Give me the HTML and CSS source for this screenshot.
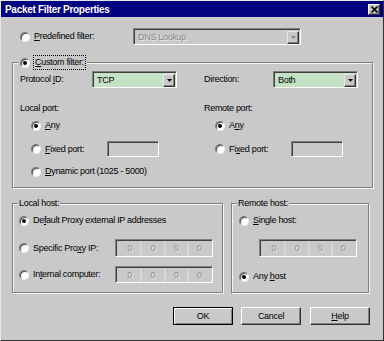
FILE: index.html
```html
<!DOCTYPE html>
<html lang="en">

<head>
  <meta charset="UTF-8" />
  <title>Packet Filter Properties</title>
  <link rel="stylesheet" href="styles.css">
</head>

<body>
  <div class="dialog">
    <div class="titlebar">
      <span class="title">Packet Filter Properties</span>
      <span class="close">
        <svg width="7" height="7" viewBox="0 0 7 7"><path d="M0.5 0.5 L6.5 6.5 M6.5 0.5 L0.5 6.5" stroke="#000" stroke-width="1.6" /></svg>
      </span>
    </div>

    <div class="predef">
      <span class="radio"></span>
      <span class="label predefLabel"><u>P</u>redefined filter:</span>
      <div class="field combo disabled predefCombo">
        <span class="comboText">DNS Lookup</span>
        <span class="drop"><svg width="5" height="3" viewBox="0 0 5 3"><path d="M0 0 H5 L2.5 3 Z" fill="#8a8a8a" /></svg></span>
      </div>
    </div>

    <div class="group custom">
      <div class="legend">
        <span class="radio on"></span>
        <span class="label focus"><u>C</u>ustom filter:</span>
      </div>
      <div class="cols">
        <div class="col">
          <div class="row selRow">
            <span class="label selLabel">Protocol <u>I</u>D:</span>
            <div class="field combo">
              <span class="comboText">TCP</span>
              <span class="drop"><svg width="5" height="3" viewBox="0 0 5 3"><path d="M0 0 H5 L2.5 3 Z" fill="#000" /></svg></span>
            </div>
          </div>
          <div class="caption">Local port:</div>
          <div class="row opt first">
            <span class="radio on"></span><span class="label"><u>A</u>ny</span>
          </div>
          <div class="row opt fixed">
            <span class="radio"></span><span class="label portLabel"><u>F</u>ixed port:</span>
            <div class="field port"></div>
          </div>
          <div class="row opt last">
            <span class="radio"></span><span class="label"><u>D</u>ynamic port (1025 - 5000)</span>
          </div>
        </div>
        <div class="col">
          <div class="row selRow">
            <span class="label selLabel dirLabel">Direction:</span>
            <div class="field combo">
              <span class="comboText">Both</span>
              <span class="drop"><svg width="5" height="3" viewBox="0 0 5 3"><path d="M0 0 H5 L2.5 3 Z" fill="#000" /></svg></span>
            </div>
          </div>
          <div class="caption">Remote port:</div>
          <div class="row opt first">
            <span class="radio on"></span><span class="label">A<u>n</u>y</span>
          </div>
          <div class="row opt fixed">
            <span class="radio"></span><span class="label portLabel">Fi<u>x</u>ed port:</span>
            <div class="field port"></div>
          </div>
        </div>
      </div>
    </div>

    <div class="hosts">
      <div class="group localHost">
        <div class="legend"><span class="label">Local host:</span></div>
        <div class="row opt hostFirst">
          <span class="radio on"></span><span class="label">De<u>f</u>ault Proxy external IP addresses</span>
        </div>
        <div class="row opt ipRow specific">
          <span class="radio"></span><span class="label ipLabel">Specific Pro<u>x</u>y IP:</span>
          <div class="field ip"><span>0</span><span>0</span><span>0</span><span>0</span></div>
        </div>
        <div class="row opt ipRow internal">
          <span class="radio"></span><span class="label ipLabel">In<u>t</u>ernal computer:</span>
          <div class="field ip"><span>0</span><span>0</span><span>0</span><span>0</span></div>
        </div>
      </div>
      <div class="group remoteHost">
        <div class="legend"><span class="label">Remote host:</span></div>
        <div class="row opt hostFirst">
          <span class="radio"></span><span class="label"><u>S</u>ingle host:</span>
        </div>
        <div class="row ipRow single">
          <div class="field ip"><span>0</span><span>0</span><span>0</span><span>0</span></div>
        </div>
        <div class="row opt anyHost">
          <span class="radio on"></span><span class="label">Any <u>h</u>ost</span>
        </div>
      </div>
    </div>

    <div class="buttons">
      <button class="btn default">OK</button>
      <button class="btn">Cancel</button>
      <button class="btn help"><u>H</u>elp</button>
    </div>
  </div>
</body>

</html>
```

FILE: styles.css
```css
* {
  margin: 0;
  padding: 0;
  box-sizing: border-box;
}

body {
  background: #c9c9c9;
  font-family: "Liberation Sans", Arial, sans-serif;
  font-size: 9px;
  letter-spacing: -0.3px;
  color: #000;
}

u {
  text-decoration: underline;
  text-underline-offset: 1px;
}

/* window */
.dialog {
  width: 384px;
  height: 341px;
  background: #c9c9c9;
  border: 1px solid;
  border-color: #e6e6e6 #303030 #303030 #e6e6e6;
}

.titlebar {
  height: 16px;
  background: #000080;
  display: flex;
  align-items: center;
  padding: 0 3px 0 4px;
}

.title {
  color: #fff;
  font-weight: bold;
  font-size: 10px;
  letter-spacing: -0.3px;
}

.close {
  margin-left: auto;
  width: 12px;
  height: 11px;
  background: #c9c9c9;
  border: 1px solid;
  border-color: #fff #303030 #303030 #fff;
  box-shadow: inset -1px -1px #808080;
  display: grid;
  place-items: center;
}

.close svg {
  display: block;
}

.row {
  display: flex;
  align-items: center;
}

.label {
  line-height: 13px;
  white-space: nowrap;
}

/* radio */
.radio {
  flex: none;
  width: 10px;
  height: 10px;
  border-radius: 50%;
  background: #fff;
  border: 1px solid;
  border-color: #7a7a7a #f2f2f2 #f2f2f2 #7a7a7a;
  box-shadow: inset 1px 1px #505050;
  margin-right: 4px;
  display: grid;
  place-items: center;
}

.radio.on::after {
  content: "";
  width: 4px;
  height: 4px;
  border-radius: 50%;
  background: #000;
}

/* sunken fields */
.field {
  border: 1px solid;
  border-color: #808080 #fff #fff #808080;
  box-shadow: inset 1px 1px #404040;
  background: #c9c9c9;
}

.combo {
  width: 85px;
  height: 17px;
  display: flex;
  align-items: center;
  background: #c6e2c4;
  padding: 1px 1px 0 2px;
}

.comboText {
  padding-left: 2px;
  line-height: 13px;
}

.drop {
  margin-left: auto;
  width: 12px;
  height: 13px;
  background: #c9c9c9;
  border: 1px solid;
  border-color: #e8e8e8 #303030 #303030 #e8e8e8;
  box-shadow: inset -1px -1px #808080;
  display: grid;
  place-items: center;
}

.drop svg {
  display: block;
}

.combo.disabled {
  background: #c9c9c9;
  color: #8a8a8a;
}

.combo.disabled .comboText {
  text-shadow: 1px 1px #e8e8e8;
}

/* predefined */
.predef {
  display: flex;
  align-items: center;
  height: 17px;
  margin-top: 11px;
  padding-left: 19px;
}

.predefLabel {
  width: 99px;
}

.predefCombo {
  width: 168px;
}

/* group boxes */
.group {
  border: 1px solid #808080;
  box-shadow: inset 1px 1px #f4f4f4, 1px 1px 0 #f4f4f4;
}

.legend {
  display: flex;
  align-items: center;
  width: fit-content;
  height: 13px;
  margin: -7px 0 0 5px;
  padding: 0 2px;
  background: #c9c9c9;
}

.focus {
  outline: 1px dotted #000;
  outline-offset: 0;
  padding: 0 1px;
}

.custom {
  width: 361px;
  height: 126px;
  margin: 17px 0 0 11px;
}

.cols {
  display: grid;
  grid-template-columns: 184px 184px;
  margin-top: 2px;
  padding-left: 7px;
}

.selRow {
  height: 17px;
}

.selLabel {
  width: 72px;
}

.dirLabel {
  width: 69px;
}

.caption {
  margin-top: 14px;
  line-height: 13px;
}

.opt {
  padding-left: 11px;
}

.opt.first {
  margin-top: 4px;
  height: 13px;
}

.opt.fixed {
  margin-top: 9px;
  height: 16px;
}

.opt.last {
  margin-top: 8px;
  height: 13px;
}

.portLabel {
  width: 62px;
}

.port {
  width: 52px;
  height: 16px;
}

/* hosts */
.hosts {
  display: flex;
  gap: 8px;
  margin: 15px 0 0 11px;
}

.localHost {
  width: 211px;
  height: 90px;
}

.remoteHost {
  width: 138px;
  height: 90px;
}

.localHost .legend,
.remoteHost .legend {
  padding: 0 1px;
}

.hosts .opt {
  padding-left: 6px;
}

.remoteHost .opt {
  padding-left: 7px;
}

.hostFirst {
  margin-top: 4px;
  height: 13px;
}

.ipLabel {
  width: 82px;
}

.specific {
  margin-top: 12px;
  height: 18px;
}

.internal {
  margin-top: 9px;
  height: 17px;
}

.single {
  margin-top: 12px;
  height: 18px;
  padding-left: 27px;
}

.anyHost {
  margin-top: 13px;
  height: 13px;
}

.ip {
  width: 98px;
  height: 100%;
  display: flex;
  align-items: center;
  padding: 1px 2px 0 3px;
}

.ip span {
  flex: 1;
  text-align: center;
  color: #8f8f8f;
  text-shadow: 1px 1px #e4e4e4;
  line-height: 13px;
  border-left: 2px solid #d3dbd2;
}

.ip span:first-child {
  border-left: 0;
}

/* buttons */
.buttons {
  display: flex;
  justify-content: flex-end;
  gap: 8px;
  margin-top: 14px;
  padding-right: 13px;
}

.btn {
  width: 60px;
  height: 18px;
  font: inherit;
  letter-spacing: inherit;
  color: #000;
  background: #c9c9c9;
  border: 1px solid;
  border-color: #fff #303030 #303030 #fff;
  box-shadow: inset -1px -1px #808080;
}

.btn.default {
  border-color: #000;
  box-shadow: inset 1px 1px #fff, inset -1px -1px #808080;
}

.btn.help {
  margin-left: 1px;
}
```
